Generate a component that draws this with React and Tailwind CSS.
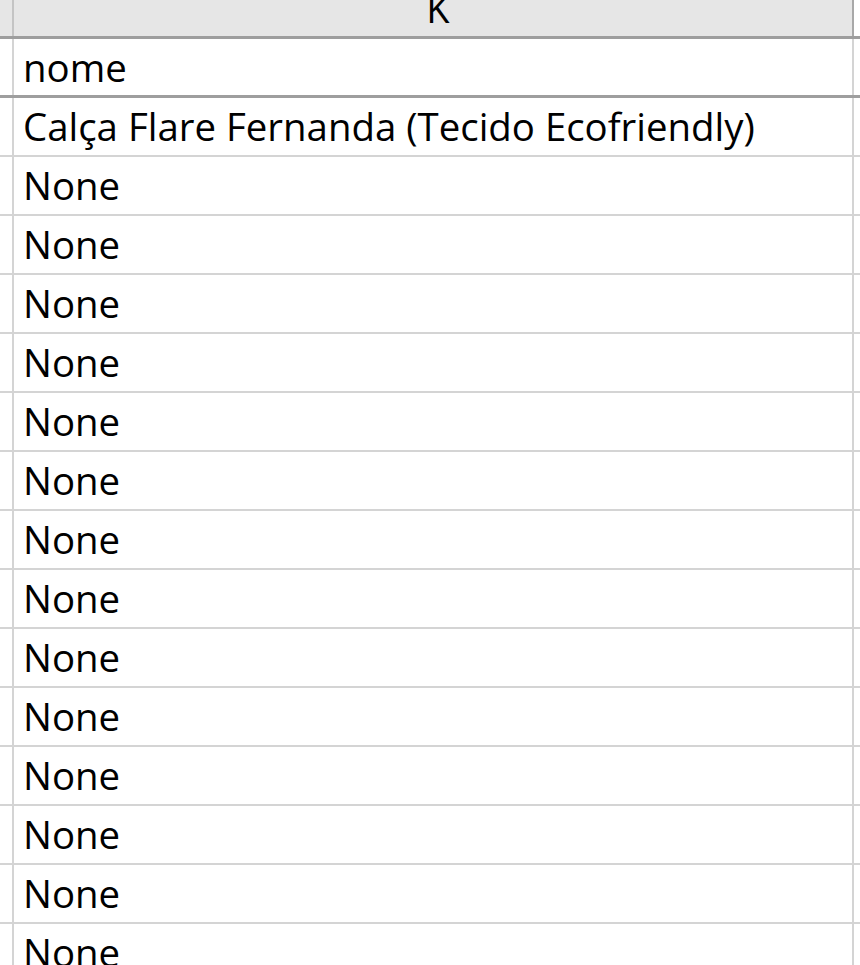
const rows = ['Calça Flare Fernanda (Tecido Ecofriendly)', ...Array(15).fill('None')];

const Row = ({ text }) => (
  <div className="flex h-[59px] shrink-0 border-b-2 border-[#d4d4d4]">
    <div className="w-[14px] shrink-0 border-r-[2.5px] border-[#d4d4d4]" />
    <div className="w-[840px] shrink-0 border-r-[2.5px] border-[#d4d4d4] pl-[9px] text-[38.4px] leading-[56px] text-black whitespace-nowrap overflow-hidden">
      {text}
    </div>
    <div className="flex-1" />
  </div>
);

export default function App() {
  return (
    <div className="h-[965px] w-[860px] overflow-hidden bg-white font-['Open_Sans','Noto_Sans',sans-serif]">
      <div className="flex h-[39px] border-b-[3px] border-[#9e9e9e]">
        <div className="w-[14px] shrink-0 bg-[#e6e6e6] border-r-[2.5px] border-[#c4c4c4]" />
        <div className="w-[840px] shrink-0 bg-[#e6e6e6] border-r-[2.5px] border-[#a8a8a8] overflow-hidden pl-[10px] text-center text-[38px] leading-[16px] text-black">
          K
        </div>
        <div className="flex-1 bg-white" />
      </div>
      <div className="flex h-[59px] border-b-[3px] border-[#9e9e9e]">
        <div className="w-[14px] shrink-0 border-r-[2.5px] border-[#d4d4d4]" />
        <div className="w-[840px] shrink-0 border-r-[2.5px] border-[#d4d4d4] pl-[9px] text-[38.4px] leading-[56px] text-black">
          nome
        </div>
        <div className="flex-1" />
      </div>
      {rows.map((t, i) => (
        <Row key={i} text={t} />
      ))}
    </div>
  );
}
